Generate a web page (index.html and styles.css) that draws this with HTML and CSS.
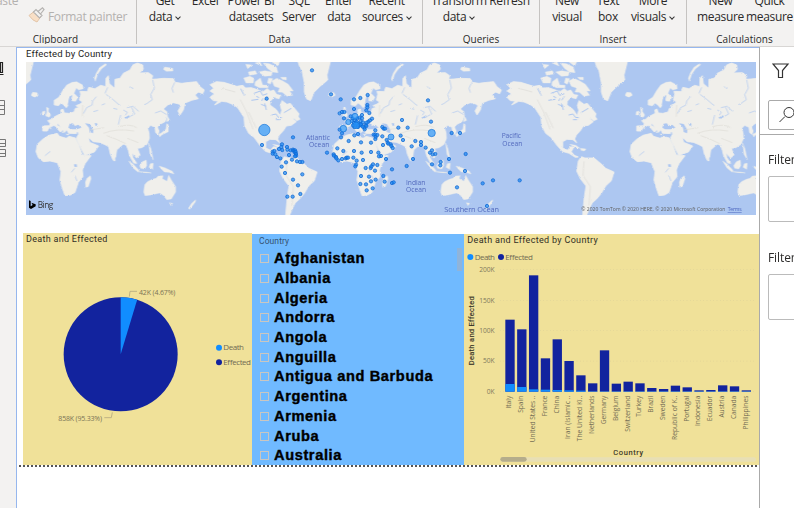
FILE: index.html
```html
<!DOCTYPE html>
<html lang="en">
<head>
<meta charset="utf-8">
<title>Report</title>
<link rel="stylesheet" href="styles.css">
</head>
<body>
<header class="ribbon">
  <section class="group clip">
    <div class="paste">aste</div>
    <div class="painter">
      <svg width="17" height="17" viewBox="0 0 17 17"><path d="M1 8.5 6 4.5 12.5 10 9 15Q5 14 1 8.5Z" fill="#f8dfc6" stroke="#e3c5a8"/><path d="M5.500 5 8 2.500 14 8.500 11.500 11ZM10 4.500 14.500 .8 16 2.500 12.500 7" fill="#f3f2f1" stroke="#b5b3b1" stroke-width="1.200"/></svg>
      <span>Format painter</span>
    </div>
    <h2>Clipboard</h2>
  </section>
  <section class="group data">
    <div class="buttons">
      <div class="btn b1">Get<br>data<i></i></div><div class="btn b2">Excel</div><div class="btn b3">Power BI<br>datasets</div><div class="btn b4">SQL<br>Server</div><div class="btn b5">Enter<br>data</div><div class="btn b6">Recent<br>sources<i></i></div>
    </div>
    <h2>Data</h2>
  </section>
  <section class="group queries">
    <div class="buttons"><div class="btn q1">Transform<br>data<i></i></div><div class="btn q2">Refresh</div></div>
    <h2>Queries</h2>
  </section>
  <section class="group insert">
    <div class="buttons"><div class="btn n1">New<br>visual</div><div class="btn n2">Text<br>box</div><div class="btn n3">More<br>visuals<i></i></div></div>
    <h2>Insert</h2>
  </section>
  <section class="group calc">
    <div class="buttons"><div class="btn c1">New<br>measure</div><div class="btn c1">Quick<br>measure</div></div>
    <h2>Calculations</h2>
  </section>
</header>
<div class="work">
  <nav class="rail">
    <svg width="16" height="120" viewBox="0 0 16 120" fill="none"><path d="M0 27.500H3.500M.5 15.500H2.500V25.500H.5Z" stroke="#222" stroke-width="1.200"/><path d="M0 53.500H4.500V67.500H0M0 58.500H4.500M0 62.500H4.500M0 92.500H5.500V99.500H0M0 96.500H5.500M0 102.500H5.500V109.500H0M0 106.500H5.500" stroke="#777"/></svg>
  </nav>
  <main class="canvas">
    <h1 class="map-title">Effected by Country</h1>
    <svg class="map" viewBox="78 21 2190 459" preserveAspectRatio="none">
      <defs>
        <filter id="coast" x="-5%" y="-5%" width="110%" height="110%" color-interpolation-filters="sRGB"><feTurbulence type="fractalNoise" baseFrequency=".3" numOctaves="2" seed="4"/><feDisplacementMap in="SourceGraphic" scale="6" xChannelSelector="R" yChannelSelector="G"/></filter>
        <g id="east">
          <g fill="#f0efeb" stroke="#f0efeb" stroke-width="2.500" stroke-linejoin="round">
            <path d="M128 213 150 212 150 205 143 197 155 193 162 186 174 180 184 175 182 165 189 162 193 174 207 175 222 171 226 160 237 158 228 152 240 147 248 141 238 135 242 118 240 109 262 110 266 97 285 101 302 91 317 95 318 70 325 62 328 86 344 100 345 73 360 70 370 55 390 45 398 30 412 24 428 30 430 43 418 54 445 53 458 62 455 73 470 72 490 70 520 71 525 82 545 85 570 82 590 80 600 95 613 105 608 116 595 111 585 120 595 131 575 136 555 144 550 165 540 180 534 168 543 152 536 147 520 143 503 150 490 162 500 170 502 182 495 200 480 208 472 216 477 228 474 238 467 233 465 217 452 211 443 220 447 234 448 250 441 268 425 278 412 280 420 300 410 309 396 294 398 307 410 325 401 324 389 302 385 286 379 271 370 267 350 285 347 306 339 315 331 297 326 275 315 269 298 262 279 260 265 246 269 262 296 273 283 291 254 301 244 282 234 261 229 249 237 236 206 235 200 224 194 232 184 219 173 205 171 211 190 223 181 231 163 211 148 217 142 228 128 228Z"/>
            <path d="M147 241 172 235 178 244 199 250 207 244 226 249 235 267 247 300 273 302 255 326 247 345 249 365 235 382 225 412 212 420 195 422 188 402 180 375 183 350 172 323 150 318 130 320 115 308 108 290 112 268 128 253Z"/>
            <path stroke-width="1" d="M162 150 162 136 176 127 187 108 200 90 216 82 230 80 248 90 250 101 236 105 229 99 222 115 234 127 227 139 216 138 210 122 206 137 207 148 199 159 190 149 183 145 175 153ZM137 183 141 170 139 157 146 160 145 169 152 180 148 187ZM126 180 127 170 135 168 134 180ZM94 120 98 112 111 113 114 121 104 126ZM286 79 283 70 289 54 300 37 316 26 320 29 304 42 293 58ZM490 43 494 36 518 40 519 48 499 49ZM257 397 256 381 261 370 271 362 273 371 265 395ZM339 317 345 309 346 318ZM386 318 399 327 417 346 414 351 399 339ZM419 332 427 320 439 315 440 332 434 342 422 340ZM413 350 436 353 454 354 439 351ZM447 337 451 326 460 325 458 343ZM477 333 494 338 517 349 522 357 506 352 493 351 484 342ZM446 264 453 282 460 315 450 298ZM476 238 484 234 498 222 500 206 505 209 505 230 486 239 479 246ZM500 200 503 184 509 196ZM495 185 491 169 500 170ZM434 389 442 380 457 373 468 370 475 363 489 362 487 371 501 379 506 361 514 375 527 395 527 411 514 432 500 434 490 421 479 414 453 420 435 422 431 411ZM508 443 518 445 513 452ZM565 460 575 445 587 434 586 441 569 463ZM149 218 153 218 153 223ZM198 237 208 237 202 240ZM185 230 193 230 189 234Z"/>
          </g>
          <g fill="#adc7f1">
            <path d="M205 218 209 206 218 205 225 213 235 209 244 218 230 223 213 223ZM255 205 269 207 280 225 279 235 269 231 267 218ZM284 205 290 204 293 211 287 213ZM208 125 217 120 212 142 220 146 203 151ZM222 328 230 328 231 336 223 335ZM373 188 387 181 390 186 378 191ZM233 231 235 237 228 235Z"/>
          </g>
          <path d="M250 176 260 158 276 150 278 138 289 125M318 118 338 133 352 145 361 152M458 75 463 99 452 119 457 134 440 146 433 149M381 158 399 154 416 169M395 157 404 177 391 184M524 82 516 100 520 113M465 174 482 168 500 179M214 352 224 340M224 361 231 378M135 302 151 289M355 209 362 180M323 97 315 115M340 160 352 163M370 165 382 172 376 181M390 95 400 101M280 170 294 166M305 150 315 146" fill="none" stroke="#adc7f1" stroke-width="2"/>
          <path d="M310 235Q350 219 402 228M320 242Q350 252 377 266M355 215Q390 205 410 218M382 250 415 263M270 225 312 218M248 150 247 185" fill="none" stroke="#dddcd6" stroke-width="3" opacity=".6"/>
        </g>
        <g id="west">
          <g fill="#f0efeb" stroke="#f0efeb" stroke-width="2.500" stroke-linejoin="round">
            <path d="M285 20 382 20 372 60 374 75 350 95 333 112 323 137 311 132 304 111 304 83 297 47 290 35Z"/>
            <path d="M21 89 40 80 62 82 101 94 120 91 127 99 145 98 166 105 180 110 193 101 202 109 212 105 222 120 211 129 202 139 201 150 220 164 232 182 236 166 232 151 237 137 252 148 262 145 271 156 288 176 285 186 269 191 280 200 265 211 250 213 242 226 229 240 224 252 230 263 218 254 201 253 188 260 188 279 203 286 211 275 221 277 214 290 223 301 235 306 226 307 207 295 187 289 170 270 153 247 137 235 125 212 123 187 104 158 91 149 72 141 56 139 35 150 45 138 31 137 21 127 34 116 21 108 32 100Z"/>
            <path d="M235 318 244 305 255 309 282 309 304 327 317 340 342 351 334 377 317 393 304 415 290 432 277 443 268 461 260 480 248 480 252 433 258 393 241 371 230 348Z"/>
            <path stroke-width="1" d="M122 69 141 64 153 70 151 84 129 84ZM136 51 157 47 162 57 139 61ZM128 28 147 30 134 41ZM157 80 172 69 179 90 195 91 195 98 169 98 155 91ZM167 51 185 47 208 51 205 62 184 64ZM156 24 171 21 177 33ZM181 24 199 26 220 36 225 53 208 51 193 40ZM206 20 230 21 224 33ZM207 78 221 70 238 77 256 88 271 108 260 108 269 121 252 124 238 112 225 111 230 99 214 94ZM197 69 209 71 202 88 193 83ZM218 118 234 120 228 132 217 129ZM272 190 281 178 292 193 281 198ZM209 268 227 271 240 280 227 278ZM242 280 258 282 253 288 243 286ZM233 67 250 67 250 75 238 73ZM376 122 380 114 393 115 396 121 386 126Z"/>
          </g>
          <path d="M153 115 172 108 179 121 193 116M145 136 166 133M174 148 190 154M206 180 219 177 226 187 236 188M219 194 231 194M185 145 190 165M113 101 124 122M193 124 185 136M243 173 265 160M160 124 168 128M180 130 176 138" fill="none" stroke="#adc7f1" stroke-width="3"/>
          <path d="M55 100 97 111M112 134 131 171 150 223M137 171 160 220M252 319 249 361 271 395 267 451" fill="none" stroke="#deddd8" stroke-width="3" opacity=".7"/>
        </g>
      </defs>
      <rect x="78" y="21" width="2190" height="459" fill="#adc7f1"/>
      <g filter="url(#coast)">
        <use href="#east"/><use href="#east" x="891"/><use href="#east" x="1782"/>
        <use href="#west" x="-282"/><use href="#west" x="609"/><use href="#west" x="1500"/>
      </g>
      <g class="ocean"><text x="918" y="255" textLength="72">Atlantic</text><text x="927" y="277" textLength="61">Ocean</text><text x="1218" y="390" textLength="58">Indian</text><text x="1218" y="412" textLength="60">Ocean</text><text x="1505" y="249" textLength="58">Pacific</text><text x="1507" y="273" textLength="60">Ocean</text><text x="1333" y="471" textLength="164" class="south">Southern Ocean</text></g>
      <g id="dots" transform="translate(720)"></g>
      <path d="M87 436 92 438V454L98 450 94 443 107 448V454L93 462 87 458Z"/>
      <text class="bing" x="113" y="458" textLength="47">Bing</text>
      <text class="copy" x="1744" y="468" textLength="432">© 2020 TomTom © 2020 HERE, © 2020 Microsoft Corporation</text><text class="copy terms" x="2183" y="468" textLength="42">Terms</text>
    </svg>
    <div class="visuals">
      <svg class="pie" viewBox="69 24 687 696">
        <text class="vtitle" x="78" y="50" textLength="244">Death and Effected</text>
        <circle cx="362" cy="388" r="171" fill="#12239e"/><path d="M362 388V217A171 171 0 0 1 411.500 224.300Z" fill="#118dff"/>
        <path d="M388 215 390 199H411M313 578H334L337 562" fill="none" stroke="#b5aa80" stroke-width="2.500"/>
        <g class="small"><text x="417" y="210" textLength="109">42K (4.67%)</text><text x="175" y="588" textLength="131">858K (95.33%)</text></g>
        <circle cx="657" cy="368" r="9" fill="#118dff"/><circle cx="657" cy="412" r="9" fill="#12239e"/>
        <g class="legend"><text x="670" y="375" textLength="62">Death</text><text x="670" y="419" textLength="83">Effected</text></g>
      </svg>
      <section class="slicer">
        <h3>Country</h3>
        <ul><li>Afghanistan</li><li>Albania</li><li>Algeria</li><li>Andorra</li><li>Angola</li><li>Anguilla</li><li>Antigua and Barbuda</li><li>Argentina</li><li>Armenia</li><li>Aruba</li><li>Australia</li></ul>
        <span class="thumb"></span>
      </section>
      <svg class="chart" viewBox="12 27 885 693">
        <text class="vtitle" x="22" y="53" textLength="391">Death and Effected by Country</text>
        <circle cx="31" cy="96" r="9" fill="#118dff"/><circle cx="123" cy="96" r="9" fill="#12239e"/>
        <g class="legend"><text x="44" y="104" textLength="61">Death</text><text x="136" y="104" textLength="83">Effected</text></g>
        <path d="M120 133.500H888M120 226.500H888M120 316.500H888M120 408.500H888M120 500H888" stroke="#d8cd98" stroke-width="2" stroke-dasharray="2 8"/>
        <g class="axis"><text x="104" y="140">200K</text><text x="104" y="233">150K</text><text x="104" y="323">100K</text><text x="104" y="415">50K</text><text x="104" y="506">0K</text></g>
        <g id="bars"></g>
        <text class="atitle" transform="translate(42 421) rotate(-90)" textLength="207">Death and Effected</text>
        <text class="atitle" x="460" y="690" textLength="89">Country</text>
        <rect x="121" y="697" width="767" height="13" rx="6" fill="#e8dfb5"/><rect x="121" y="696" width="79" height="14" rx="7" fill="#b5ad8b"/>
      </svg>
    </div>
    <div class="page-edge"></div>
  </main>
  <aside class="filters">
    <div class="funnel"><svg width="18" height="16" viewBox="0 0 18 16"><path d="M1 1H16L10.500 7.500V14.500H6.500V7.500Z" fill="none" stroke="#333" stroke-width="1.200"/></svg></div>
    <div class="search"><svg width="16" height="18" viewBox="0 0 16 18"><path d="M.5 16 6 10.500" stroke="#333" fill="none"/><circle cx="10" cy="6.500" r="5" fill="none" stroke="#333"/></svg></div>
    <div class="sep"></div>
    <h4>Filter</h4><div class="well w1"></div>
    <h4>Filter</h4><div class="well"></div>
  </aside>
</div>
<script src="report.js"></script>
</body>
</html>
```
FILE: styles.css
```css
* { box-sizing: border-box; }
body { margin: 0; width: 794px; height: 508px; overflow: hidden; background: #fff; font-family: "Open Sans", "Noto Sans", sans-serif; color: #2b2a29; }
h1, h2, h3, h4, ul { margin: 0; padding: 0; font-weight: 400; }
.ribbon { display: flex; height: 47px; background: #f3f2f1; border-bottom: 1px solid #d8d6d4; overflow: hidden; }
.group { height: 44px; border-right: 1px solid #c5c3c1; flex: none; display: flex; flex-direction: column; justify-content: space-between; overflow: hidden; }
.group h2 { font-size: 10px; line-height: 12px; height: 11px; text-align: center; }
.clip { width: 137px; display: block; }
.clip h2 { margin-right: 25px; margin-top: 8px; }
.data { width: 286px; }
.queries { width: 117px; }
.insert { width: 147px; }
.calc { width: 107px; border: 0; }
.calc h2 { padding-left: 8px; }
.paste { height: 8px; line-height: 12px; font-size: 12px; letter-spacing: -.3px; color: #b3b1af; margin-top: -5px; padding-bottom: 6px; margin-left: -4px; }
.painter { display: flex; align-items: center; gap: 3px; height: 17px; margin-top: 5px; padding-left: 28px; font-size: 12px; letter-spacing: -.34px; color: #b3b1af; white-space: nowrap; }
.painter svg { margin-top: -2px; }
.buttons { display: flex; margin-top: -7px; height: 33px; }
.btn { text-align: center; font-size: 12px; letter-spacing: -.35px; line-height: 16px; white-space: nowrap; flex: none; }
.btn i { display: inline-block; width: 4px; height: 4px; border: solid #333; border-width: 0 1.4px 1.4px 0; transform: rotate(45deg); margin: 0 1px 2px 4px; }
.b1 { width: 50px; margin-left: 3px; } .b2 { width: 30px; } .b3 { width: 62px; } .b4 { width: 34px; } .b5 { width: 46px; } .b6 { width: 49px; }
.q1 { width: 60px; margin-left: 6px; } .q2 { width: 41px; }
.n1 { width: 44px; margin-left: 5px; } .n2 { width: 38px; } .n3 { width: 52px; }
.c1 { width: 49px; }
.c1:first-child { margin-left: 9px; }
.work { display: flex; height: 461px; }
.rail { width: 16px; background: #f3f2f1; flex: none; }
.rail svg { display: block; }
.canvas { width: 743px; flex: none; border: solid #96b7ee; border-width: 1px 0 0 1px; }
.map-title { font: 9.5px/12px Roboto, sans-serif; height: 14px; padding-left: 9px; color: #252423; letter-spacing: .18px; }
.map { display: block; width: 730px; height: 153px; margin-left: 9px; }
text { font-family: "Open Sans", sans-serif; }
.ocean text { font-size: 20px; fill: #5269bd; }
.ocean .south { font-size: 22px; }
.bing { font-size: 25px; fill: #333; }
.copy { font-size: 15px; fill: #606060; }
.terms { fill: #4862bd; text-decoration: underline; }
.visuals { display: flex; align-items: flex-end; margin: 18px 0 0 6px; height: 232px; }
.pie { width: 229px; height: 232px; background: #f0e199; flex: none; display: block; }
.chart { width: 295px; height: 231px; background: #f0e199; flex: none; display: block; }
.vtitle { font: 27px Roboto, sans-serif; fill: #302e25; }
.legend text { font-size: 24px; fill: #706b54; }
.small text { font-size: 21px; fill: #7b7456; }
.axis text { font-size: 20px; fill: #817a5d; text-anchor: end; }
.cat { font-size: 20px; fill: #746e55; text-anchor: end; }
.atitle { font: 22.5px Roboto, sans-serif; fill: #343126; stroke: #343126; stroke-width: .4px; }
.slicer { position: relative; width: 212px; height: 231px; background: #70baff; flex: none; overflow: hidden; padding: 1px 0 0 7px; }
.slicer h3 { font: 8.5px/12px Roboto, sans-serif; letter-spacing: .1px; color: #355271; height: 14px; }
.slicer ul { list-style: none; }
.slicer li { display: flex; align-items: center; height: 19.7px; font: 900 14.6px/19px "Liberation Sans", sans-serif; color: #000; letter-spacing: .61px; -webkit-text-stroke: .4px #000; white-space: nowrap; }
.slicer li::before { content: ""; width: 7px; height: 7px; border: 1px solid #c9c6c1; margin: 0 5px 0 1px; flex: none; }
.thumb { position: absolute; right: 2px; top: 14px; width: 5px; height: 23px; background: #8fb4da; }
.page-edge { height: 2px; margin-left: 2px; background: repeating-linear-gradient(90deg, #555 0 2px, transparent 2px 4px); }
.filters { width: 35px; border-left: 1px solid #aaa; padding-left: 8px; overflow: hidden; }
.funnel { height: 53px; padding: 15px 0 0 4px; }
.search { width: 60px; height: 30px; border: 1px solid #aaa; border-radius: 2px; padding: 5px 0 0 10px; }
.sep { height: 1px; background: #aaa; margin: 4px 0 0 -8px; }
.filters h4 { font-size: 12px; line-height: 16px; margin-top: 17px; height: 24px; letter-spacing: -.1px; white-space: nowrap; }
.well { width: 60px; height: 46px; border: 1px solid #bbb; border-radius: 2px; }
.w1 { margin-bottom: 28px; }
```
FILE: report.js
```js
const NS = "http://www.w3.org/2000/svg";
function add(parent, tag, attrs, text) {
  const el = document.createElementNS(NS, tag);
  for (const k in attrs) el.setAttribute(k, attrs[k]);
  if (text) el.textContent = text;
  parent.appendChild(el);
}
const points = [[216,46],[80,131],[273,118],[302,133],[342,133],[361,129],[383,120],[564,136],[342,162],[382,150],[382,157],[379,166],[388,174],[299,175],[306,171],[313,171],[312,190],[332,184],[338,190],[345,196],[352,190],[359,188],[366,180],[366,190],[335,198],[342,204],[350,200],[356,205],[362,199],[369,202],[377,210],[373,218],[364,211],[354,216],[343,216],[346,211],[355,211],[385,200],[390,196],[396,191],[380,203],[374,223],[368,215],[349,206],[339,211],[299,224],[306,235],[303,247],[343,241],[354,237],[362,208],[379,213],[406,226],[427,216],[431,221],[435,221],[401,239],[406,239],[407,246],[412,240],[406,252],[427,244],[440,255],[443,263],[445,266],[452,268],[454,273],[458,279],[429,270],[475,218],[486,195],[503,218],[573,200],[482,242],[489,255],[515,274],[526,258],[543,261],[543,270],[557,278],[570,293],[576,286],[578,298],[586,297],[576,328],[602,321],[601,331],[627,312],[635,234],[660,234],[677,297],[675,348],[630,353],[500,333],[519,312],[456,343],[456,384],[461,382],[651,397],[728,385],[759,376],[839,376],[741,453],[159,247],[66,270],[98,290],[103,288],[98,296],[106,298],[111,306],[121,310],[117,282],[126,268],[124,276],[127,285],[141,276],[142,284],[152,286],[159,284],[161,287],[165,286],[164,292],[167,291],[168,297],[168,302],[165,304],[147,300],[156,314],[171,319],[180,321],[187,321],[138,322],[125,335],[135,354],[187,358],[159,374],[174,391],[181,417],[142,425],[158,425],[326,258],[363,262],[393,263],[292,280],[310,288],[342,288],[365,293],[393,291],[415,293],[423,303],[438,312],[261,293],[281,298],[282,302],[288,306],[289,310],[295,316],[306,312],[317,310],[320,308],[324,308],[340,308],[350,317],[369,315],[348,329],[346,334],[377,339],[392,339],[394,334],[399,328],[412,330],[405,347],[417,304],[387,365],[407,374],[393,379],[361,387],[378,388],[398,400],[380,406],[434,380],[430,363],[363,363]];
const dots = document.getElementById("dots");
for (const [x, y] of points) {
  add(dots, "circle", { cx: x, cy: y, r: 5, fill: "#1686f4", "fill-opacity": .7, stroke: "#0f67d2", "stroke-width": 2.2 });
}
for (const [x, y, r] of [[73,225,17],[310,221,10],[325,201,8],[345,184,9],[348,211,10],[453,246,9],[575,234,11]]) {
  add(dots, "circle", { cx: x, cy: y, r, fill: "#2b95f9", "fill-opacity": .7, stroke: "#1472d8", "stroke-width": 2 });
}
const bars = document.getElementById("bars");
const data = [["Italy",284,477],["Spain",313,486],["United States ..",151,493,140],["France",400,494],["China",343,495],["Iran (Islamic ..",408,496,130],["The United Ki..",451,497,137],["Netherlands",475,499],["Germany",376,499],["Belgium",476,499],["Switzerland",470,499],["Turkey",475,499],["Brazil",489,499],["Sweden",492,499],["Republic of K..",482,499,133],["Portugal",487,499],["Indonesia",496,499],["Ecuador",495,499],["Austria",481,499],["Canada",484,499],["Philippines",496,499]];
data.forEach(([name, top, split, len], i) => {
  const x = 136 + i * 35.45;
  add(bars, "rect", { x, y: top, width: 28, height: 500 - top, fill: "#12239e" });
  add(bars, "rect", { x, y: split, width: 28, height: 500 - split, fill: "#118dff" });
  const attrs = { class: "cat", transform: `translate(${x + 18} 512) rotate(-90)` };
  if (len) attrs.textLength = len;
  add(bars, "text", attrs, name);
});
```
